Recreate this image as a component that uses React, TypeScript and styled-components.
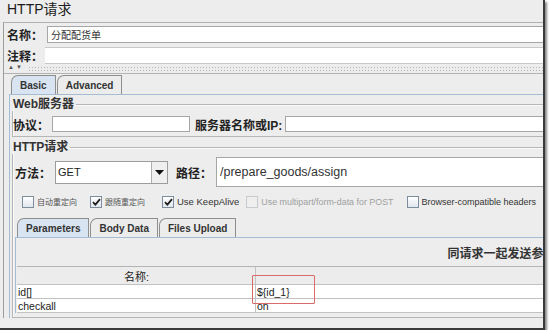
import React from "react";
import styled, { createGlobalStyle } from "styled-components";

const FONT = `"Liberation Sans", Arial, "Noto Sans CJK SC", sans-serif`;

const Global = createGlobalStyle`
  html, body { margin: 0; padding: 0; background: #ffffff; }
  body { font-family: ${FONT}; }
  * { box-sizing: border-box; }
`;

const Frame = styled.div`
  width: 545px;
  height: 330px;
  overflow: hidden;
  background: #ededed;
  border-right: 2px solid #3a3a3a;
  border-bottom: 2px solid #3a3a3a;
  box-shadow: 2px 2px 2px #8a8a8a;
`;

const Wide = styled.div`
  width: 1000px;
  display: flex;
  flex-direction: column;
`;

const Title = styled.div`
  height: 22px;
  padding-left: 7px;
  font-size: 14px;
  line-height: 19px;
  color: #1c1c1c;
`;

const Outer = styled.div`
  margin-left: 3px;
  border-left: 1px solid #9c9c9c;
  border-top: 1px solid #b0b0b0;
  padding-top: 3px;
  display: flex;
  flex-direction: column;
`;

const FieldRow = styled.div<{ $gap?: number; $mb?: number }>`
  display: flex;
  align-items: center;
  height: 17px;
  padding-left: 3px;
  gap: ${(p) => p.$gap ?? 4}px;
  margin-bottom: ${(p) => p.$mb ?? 0}px;
`;

const Label = styled.span<{ $ml?: number }>`
  font-weight: bold;
  font-size: 12px;
  color: #222;
  white-space: nowrap;
  margin-left: ${(p) => p.$ml ?? 0}px;
`;

const TextField = styled.div<{ $bare?: boolean; $w?: number; $h?: number; $fs?: number }>`
  ${(p) => (p.$w ? `width: ${p.$w}px; flex: none;` : "flex: 1;")}
  height: ${(p) => p.$h ?? 17}px;
  background: #fff;
  border: 1px solid #a6a6a6;
  ${(p) => (p.$bare ? "border-left: none; border-right: none; border-color: #c8c8c8;" : "")}
  font-size: ${(p) => p.$fs ?? 10}px;
  color: #333;
  padding-left: 3px;
  display: flex;
  align-items: center;
  white-space: nowrap;
`;

const Splitter = styled.div`
  height: 10px;
  display: flex;
  align-items: center;
  gap: 4px;
  padding-left: 4px;
  border-bottom: 1px solid #b2b2b2;
`;

const Arrows = styled.span`
  font-size: 6px;
  color: #555;
  letter-spacing: 2px;
  line-height: 6px;
  margin-top: -4px;
`;

const Dots = styled.div`
  flex: 1;
  height: 5px;
  background-image: radial-gradient(circle, #b4b4b4 0.7px, transparent 1px);
  background-size: 3px 3px;
`;

const Tabbed = styled.div<{ $left: number; $top: number }>`
  margin-left: ${(p) => p.$left}px;
  margin-top: ${(p) => p.$top}px;
  display: flex;
  flex-direction: column;
`;

const TabStrip = styled.div`
  display: flex;
  align-items: flex-end;
  padding-left: 2px;
  gap: 1px;
  height: 19px;
`;

const Tab = styled.div<{ $active?: boolean }>`
  height: 19px;
  padding: 0 8px;
  font-weight: bold;
  font-size: 10px;
  color: #333;
  display: flex;
  align-items: center;
  border: 1px solid #8e8e8e;
  border-bottom: none;
  border-top-left-radius: 7px;
  background: ${(p) => (p.$active ? "#d8e4f1" : "#ececec")};
`;

const TabPanel = styled.div<{ $pad?: string }>`
  border-top: 1px solid #a4bcd4;
  border-left: 1px solid #a4bcd4;
  padding: ${(p) => p.$pad ?? "0"};
  display: flex;
  flex-direction: column;
`;

const Group = styled.fieldset<{ $top?: number }>`
  margin: ${(p) => p.$top ?? 0}px 0 0 0;
  padding: 0 0 4px 0;
  border: 1px solid #b6b6b6;
  box-shadow: inset 1px 1px 0 #fafafa;
  min-width: 0;
`;

const Legend = styled.legend`
  font-weight: bold;
  font-size: 12px;
  line-height: 14px;
  color: #333;
  padding: 0 2px 0 1px;
  margin-left: -1px;
`;

const Row = styled.div<{ $h: number; $top: number; $pl?: number; $gap?: number }>`
  display: flex;
  align-items: center;
  height: ${(p) => p.$h}px;
  margin-top: ${(p) => p.$top}px;
  padding-left: ${(p) => p.$pl ?? 0}px;
  gap: ${(p) => p.$gap ?? 0}px;
`;

const Combo = styled.div`
  width: 113px;
  height: 23px;
  background: #fff;
  border: 1px solid #9c9c9c;
  display: flex;
  align-items: stretch;
  font-size: 11px;
  color: #222;
`;

const ComboText = styled.span`
  flex: 1;
  display: flex;
  align-items: center;
  padding-left: 2px;
`;

const ComboButton = styled.span`
  width: 16px;
  background: #efefef;
  border-left: 1px solid #b0b0b0;
  display: flex;
  align-items: center;
  justify-content: center;
`;

const CheckItem = styled.label<{ $disabled?: boolean; $cjk?: boolean; $ml?: number; $fs?: number }>`
  display: flex;
  align-items: center;
  gap: 3px;
  margin-left: ${(p) => p.$ml ?? 0}px;
  font-size: ${(p) => p.$fs ?? (p.$cjk ? 8 : p.$disabled ? 8.9 : 9.5)}px;
  color: ${(p) => (p.$disabled ? "#a0a0a0" : p.$cjk ? "#555" : "#333")};
  white-space: nowrap;
`;

const Box = styled.span<{ $disabled?: boolean }>`
  width: 12px;
  height: 12px;
  flex: none;
  border: 1px solid ${(p) => (p.$disabled ? "#c6cbd0" : "#7f8c9a")};
  background: ${(p) => (p.$disabled ? "#efefef" : "linear-gradient(#ffffff, #dfe6ee)")};
  display: inline-flex;
  align-items: center;
  justify-content: center;
`;

const CenterLabel = styled.div`
  height: 14px;
  margin-top: 9px;
  text-align: center;
  font-weight: bold;
  font-size: 12px;
  line-height: 14px;
  color: #333;
`;

const TableWrap = styled.div`
  position: relative;
  margin: 5px 0 0 1px;
  border-top: 1px solid #b4b4b4;
`;

const Grid = styled.div<{ $head?: boolean }>`
  display: grid;
  grid-template-columns: 239px 720px 1fr;
  height: ${(p) => (p.$head ? 18 : 14)}px;
  background: ${(p) => (p.$head ? "#ececec" : "#fff")};
  border-bottom: 1px solid #c2c2c2;
`;

const Cell = styled.div<{ $head?: boolean }>`
  border-right: 1px solid #c2c2c2;
  font-size: ${(p) => (p.$head ? 11 : 10.5)}px;
  color: #222;
  display: flex;
  align-items: center;
  justify-content: ${(p) => (p.$head ? "center" : "flex-start")};
  padding-left: 1px;
  white-space: nowrap;
`;

const Mark = styled.div`
  position: absolute;
  left: 235px;
  top: 8px;
  width: 63px;
  height: 29px;
  border: 1.5px solid #dc6a6a;
  border-radius: 1px;
`;

const Check = () => (
  <svg width="9" height="8" viewBox="0 0 9 8">
    <path d="M1 4.2 L3.4 6.6 L8 1.2" fill="none" stroke="#1e1e1e" strokeWidth="1.8" />
  </svg>
);

const Caret = () => (
  <svg width="9" height="5" viewBox="0 0 9 5">
    <path d="M0 0 H9 L4.5 5 Z" fill="#111" />
  </svg>
);

export default function App() {
  return (
    <>
      <Global />
      <Frame>
        <Wide>
          <Title>HTTP请求</Title>
          <Outer>
            <FieldRow $mb={4}>
              <Label>名称：</Label>
              <TextField>分配配货单</TextField>
            </FieldRow>
            <FieldRow $gap={2}>
              <Label>注释：</Label>
              <TextField $bare />
            </FieldRow>
            <Splitter>
              <Arrows>▲▼</Arrows>
              <Dots />
            </Splitter>
            <Tabbed $left={5} $top={1}>
              <TabStrip>
                <Tab $active>Basic</Tab>
                <Tab>Advanced</Tab>
              </TabStrip>
              <TabPanel $pad="2px 0 0 2px">
                <Group>
                  <Legend>Web服务器</Legend>
                  <Row $h={16} $top={5} $gap={3}>
                    <Label>协议：</Label>
                    <TextField $w={138} $h={16} />
                    <Label $ml={2}>服务器名称或IP:</Label>
                    <TextField $h={16} />
                  </Row>
                </Group>
                <Group $top={3}>
                  <Legend>HTTP请求</Legend>
                  <Row $h={30} $top={3} $pl={2} $gap={4}>
                    <Label>方法：</Label>
                    <Combo>
                      <ComboText>GET</ComboText>
                      <ComboButton>
                        <Caret />
                      </ComboButton>
                    </Combo>
                    <Label $ml={4}>路径：</Label>
                    <TextField $h={30} $fs={12.5}>
                      /prepare_goods/assign
                    </TextField>
                  </Row>
                  <Row $h={13} $top={8} $pl={9}>
                    <CheckItem $cjk>
                      <Box />
                      自动重定向
                    </CheckItem>
                    <CheckItem $cjk $ml={13}>
                      <Box>
                        <Check />
                      </Box>
                      跟随重定向
                    </CheckItem>
                    <CheckItem $ml={17}>
                      <Box>
                        <Check />
                      </Box>
                      Use KeepAlive
                    </CheckItem>
                    <CheckItem $disabled $ml={7}>
                      <Box $disabled />
                      Use multipart/form-data for POST
                    </CheckItem>
                    <CheckItem $ml={13} $fs={9}>
                      <Box />
                      Browser-compatible headers
                    </CheckItem>
                  </Row>
                  <Tabbed $left={2} $top={10}>
                    <TabStrip>
                      <Tab $active>Parameters</Tab>
                      <Tab>Body Data</Tab>
                      <Tab>Files Upload</Tab>
                    </TabStrip>
                    <TabPanel>
                      <CenterLabel>同请求一起发送参数：</CenterLabel>
                      <TableWrap>
                        <Grid $head>
                          <Cell $head>名称:</Cell>
                          <Cell $head>值</Cell>
                          <Cell $head />
                        </Grid>
                        <Grid>
                          <Cell>id[]</Cell>
                          <Cell>{"${id_1}"}</Cell>
                          <Cell />
                        </Grid>
                        <Grid>
                          <Cell>checkall</Cell>
                          <Cell>on</Cell>
                          <Cell />
                        </Grid>
                        <Mark />
                      </TableWrap>
                    </TabPanel>
                  </Tabbed>
                </Group>
              </TabPanel>
            </Tabbed>
          </Outer>
        </Wide>
      </Frame>
    </>
  );
}
